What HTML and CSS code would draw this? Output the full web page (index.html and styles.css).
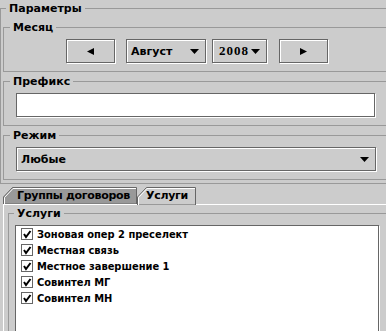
FILE: index.html
```html
<!DOCTYPE html>
<html lang="ru">
<head>
<meta charset="utf-8">
<title>Параметры</title>
<link rel="stylesheet" href="styles.css">
</head>
<body>
<div class="window">
  <fieldset class="grp outer">
    <legend>Параметры</legend>
    <fieldset class="grp inner">
      <legend>Месяц</legend>
      <div class="month-row">
        <div class="btn nav-prev"><svg width="7" height="7" viewBox="0 0 7 7"><polygon points="0,3.5 7,0 7,7" fill="#000"/></svg></div>
        <div class="combo month-combo"><span class="combo-text">Август</span><svg class="arrow" width="9" height="5" viewBox="0 0 9 5"><polygon points="0,0 9,0 4.5,5" fill="#000"/></svg></div>
        <div class="combo year-combo"><span class="combo-text serif">2008</span><svg class="arrow" width="9" height="5" viewBox="0 0 9 5"><polygon points="0,0 9,0 4.5,5" fill="#000"/></svg></div>
        <div class="btn nav-next"><svg width="7" height="7" viewBox="0 0 7 7"><polygon points="7,3.5 0,0 0,7" fill="#000"/></svg></div>
      </div>
    </fieldset>
    <fieldset class="grp inner">
      <legend>Префикс</legend>
      <div class="field"></div>
    </fieldset>
    <fieldset class="grp inner">
      <legend>Режим</legend>
      <div class="combo wide-combo"><span class="combo-text">Любые</span><svg class="arrow" width="9" height="5" viewBox="0 0 9 5"><polygon points="0,0 9,0 4.5,5" fill="#000"/></svg></div>
    </fieldset>
  </fieldset>

  <div class="tabs">
    <div class="tab-strip">
      <div class="tab tab-off">
        <svg class="tab-shape" width="134" height="18" viewBox="0 0 134 18"><polygon points="0.5,17 0.5,10 9.5,0.5 133.5,0.5 133.5,17" fill="#999" stroke="#666"/><polyline points="1.5,17 1.5,10.5 10,1.5 133,1.5" fill="none" stroke="#fff"/><line x1="0" y1="17.5" x2="134" y2="17.5" stroke="#fff"/></svg>
        <span class="tab-label">Группы договоров</span>
      </div>
      <div class="tab tab-on">
        <svg class="tab-shape" width="59" height="18" viewBox="0 0 59 18"><polygon points="0.5,18 0.5,10 9.5,0.5 58.5,0.5 58.5,18" fill="#ccc" stroke="#666"/><polyline points="1.5,18 1.5,10.5 10,1.5 58,1.5" fill="none" stroke="#fff"/></svg>
        <span class="tab-label">Услуги</span>
      </div>
      <div class="tab-rest"></div>
    </div>
    <div class="tab-pane">
      <fieldset class="grp services">
        <legend>Услуги</legend>
        <div class="list">
          <div class="item"><svg class="check" width="13" height="13" viewBox="0 0 13 13"><rect x="0.5" y="0.5" width="11" height="11" fill="#fff" stroke="#666"/><polyline points="3,6 5,9 9.5,3" fill="none" stroke="#000" stroke-width="2"/></svg><span>Зоновая опер 2 преселект</span></div>
          <div class="item"><svg class="check" width="13" height="13" viewBox="0 0 13 13"><rect x="0.5" y="0.5" width="11" height="11" fill="#fff" stroke="#666"/><polyline points="3,6 5,9 9.5,3" fill="none" stroke="#000" stroke-width="2"/></svg><span>Местная связь</span></div>
          <div class="item"><svg class="check" width="13" height="13" viewBox="0 0 13 13"><rect x="0.5" y="0.5" width="11" height="11" fill="#fff" stroke="#666"/><polyline points="3,6 5,9 9.5,3" fill="none" stroke="#000" stroke-width="2"/></svg><span>Местное завершение 1</span></div>
          <div class="item"><svg class="check" width="13" height="13" viewBox="0 0 13 13"><rect x="0.5" y="0.5" width="11" height="11" fill="#fff" stroke="#666"/><polyline points="3,6 5,9 9.5,3" fill="none" stroke="#000" stroke-width="2"/></svg><span>Совинтел МГ</span></div>
          <div class="item"><svg class="check" width="13" height="13" viewBox="0 0 13 13"><rect x="0.5" y="0.5" width="11" height="11" fill="#fff" stroke="#666"/><polyline points="3,6 5,9 9.5,3" fill="none" stroke="#000" stroke-width="2"/></svg><span>Совинтел МН</span></div>
        </div>
      </fieldset>
    </div>
  </div>
</div>
</body>
</html>
```

FILE: styles.css
```css
html, body {
  margin: 0;
  padding: 0;
  background: #cccccc;
  overflow: hidden;
}
body {
  width: 386px;
  height: 331px;
  font-family: "DejaVu Sans", sans-serif;
  font-weight: bold;
  font-size: 11px;
  color: #000;
}
.window {
  width: 394px;
}
fieldset.grp {
  margin: 0;
  min-width: 0;
  border: 1px solid #999;
}
fieldset.grp > legend {
  padding: 0 3px;
  line-height: 17px;
  height: 17px;
  font-size: 11px;
}
.outer {
  margin-left: 2px;
  padding: 2px 2px 3px 2px;
}
.outer > legend {
  margin-left: 3px;
}
.inner {
  padding: 3px 12px 8px 12px;
}
.inner + .inner {
  margin-top: 1px;
}
.inner > legend {
  margin-left: -6px;
}
.month-row {
  display: flex;
  justify-content: center;
  height: 24px;
}
.btn, .combo, .field {
  box-sizing: border-box;
  height: 24px;
  border: 1px solid #666;
  box-shadow: 1px 1px 0 #fff, inset 1px 1px 0 #fff;
}
.btn {
  width: 49px;
  display: flex;
  align-items: center;
  justify-content: center;
}
.nav-prev svg { margin-right: 1px; }
.combo {
  display: flex;
  align-items: center;
  justify-content: space-between;
  padding: 0 6px 0 4px;
}
.month-combo {
  width: 80px;
  margin-left: 11px;
}
.year-combo {
  width: 55px;
  margin-left: 6px;
  padding-left: 6px;
}
.nav-next {
  margin-left: 12px;
}
.serif {
  font-family: "Liberation Serif", serif;
  font-size: 13px;
  letter-spacing: 1px;
}
.field {
  width: 359px;
  background: #fff;
}
.wide-combo {
  width: 360px;
  padding-right: 6px;
}
.tabs {
  margin-top: 3px;
}
.tab-strip {
  display: flex;
  height: 18px;
  padding-left: 3px;
}
.tab {
  position: relative;
  height: 17px;
  display: flex;
  align-items: center;
}
.tab-shape {
  position: absolute;
  left: 0;
  top: 0;
}
.tab-label {
  position: relative;
  letter-spacing: -0.3px;
}
.tab-off {
  width: 134px;
}
.tab-off .tab-label { margin-left: 14px; }
.tab-on {
  width: 59px;
}
.tab-on .tab-label { margin-left: 9px; }
.tab-rest {
  flex: 1;
  border-bottom: 1px solid #fff;
}
.tab-pane {
  margin-left: 3px;
  border-left: 1px solid #fff;
  padding: 0 0 0 4px;
  height: 130px;
}
.services {
  padding: 3px 0 0 6px;
  height: 140px;
}
.services > legend {
  margin-left: -1px;
}
.list {
  box-sizing: border-box;
  width: 364px;
  height: 130px;
  background: #fff;
  border: 1px solid #666;
  box-shadow: 1px 1px 0 #fff;
  padding: 0 0 0 5px;
  font-family: "DejaVu Sans Condensed", "DejaVu Sans", sans-serif;
}
.item {
  display: flex;
  align-items: center;
  height: 16px;
}
.check {
  margin-right: 3px;
  flex: none;
}
```
